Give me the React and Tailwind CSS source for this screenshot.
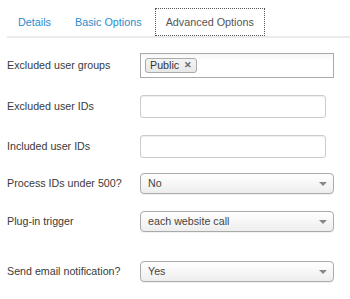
import { useState } from "react";

const tabs = ["Details", "Basic Options", "Advanced Options"];

function Select({ value }) {
  return (
    <div className="relative w-[194px] h-[21px] rounded-[4px] border border-[#aaa] bg-gradient-to-b from-white to-[#eee] shadow-[0_1px_0_rgba(0,0,0,0.05)] flex items-center pl-[7px] text-[#444]">
      <span>{value}</span>
      <span className="absolute right-[6px] top-[8px] w-0 h-0 border-l-[4px] border-r-[4px] border-t-[4px] border-l-transparent border-r-transparent border-t-[#888]" />
    </div>
  );
}

function TextInput() {
  return (
    <div className="w-[186px] h-[23px] rounded-[3px] border border-[#ccc] bg-white shadow-[inset_0_1px_1px_rgba(0,0,0,0.075)]" />
  );
}

export default function App() {
  const [active, setActive] = useState(2);

  return (
    <div className="w-[350px] h-[299px] bg-white overflow-hidden text-[10.7px] text-[#3a3a3a] font-['Liberation_Sans',Arial,sans-serif]">
      {/* tabs */}
      <ul className="flex ml-[7px] pt-[8px] border-b-2 border-[#ebebeb] text-[10.8px]">
        {tabs.map((t, i) => (
          <li
            key={t}
            onClick={() => setActive(i)}
            className={
              i === active
                ? "h-[28px] -mb-[2px] px-[10px] flex items-center border border-dotted border-[#555] bg-white text-[#555] cursor-pointer"
                : "h-[28px] px-[11px] mr-[2px] flex items-center text-[#2a8ccd] cursor-pointer"
            }
          >
            {t}
          </li>
        ))}
      </ul>

      {/* form */}
      <div className="flex flex-col pl-[7px]">
        <div className="flex items-center h-[25px] mt-[15px]">
          <label className="w-[133px]">Excluded user groups</label>
          <div className="w-[194px] h-[25px] border border-[#aaa] bg-gradient-to-b from-[#f6f6f6] to-white to-[30%] flex items-center pl-[4px]">
            <span className="h-[15px] flex items-center gap-[5px] px-[4px] rounded-[3px] border border-[#aaa] bg-gradient-to-b from-[#f4f4f4] to-[#e8e8e8] text-[#333] leading-none">
              Public
              <span className="text-[#666] font-bold text-[9px]">✕</span>
            </span>
          </div>
        </div>

        <div className="flex items-center h-[23px] mt-[17px]">
          <label className="w-[133px]">Excluded user IDs</label>
          <TextInput />
        </div>

        <div className="flex items-center h-[23px] mt-[17px]">
          <label className="w-[133px]">Included user IDs</label>
          <TextInput />
        </div>

        <div className="flex items-center h-[21px] mt-[15px]">
          <label className="w-[133px]">Process IDs under 500?</label>
          <Select value="No" />
        </div>

        <div className="flex items-center h-[21px] mt-[17px]">
          <label className="w-[133px]">Plug-in trigger</label>
          <Select value="each website call" />
        </div>

        <div className="flex items-center h-[21px] mt-[29px]">
          <label className="w-[133px]">Send email notification?</label>
          <Select value="Yes" />
        </div>
      </div>
    </div>
  );
}
